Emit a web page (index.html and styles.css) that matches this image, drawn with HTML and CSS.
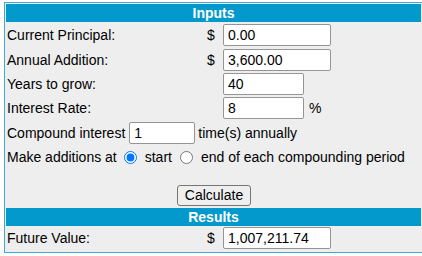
FILE: index.html
```html
<!DOCTYPE html>
<html>
<head>
<meta charset="utf-8">
<link rel="stylesheet" href="styles.css">
</head>
<body>
<div class="panel">
  <div class="head">Inputs</div>
  <div class="content">
    <div class="row"><span class="lbl">Current Principal:</span><span class="cur">$</span><input class="field wide" type="text" value="0.00"></div>
    <div class="row"><span class="lbl">Annual Addition:</span><span class="cur">$</span><input class="field wide" type="text" value="3,600.00"></div>
    <div class="row"><span class="lbl">Years to grow:</span><span class="cur"></span><input class="field mid" type="text" value="40"></div>
    <div class="row"><span class="lbl">Interest Rate:</span><span class="cur"></span><input class="field mid" type="text" value="8"><span class="unit">%</span></div>
    <div class="row">Compound interest<input class="field small" type="text" value="1"><span class="after">time(s) annually</span></div>
    <div class="row">Make additions at<input class="radio first" type="radio" name="add" checked><span>start</span><input class="radio" type="radio" name="add"><span>end of each compounding period</span></div>
    <div class="actions"><button class="btn" type="button">Calculate</button></div>
  </div>
  <div class="head">Results</div>
  <div class="content result">
    <div class="row"><span class="lbl">Future Value:</span><span class="cur">$</span><input class="field wide" type="text" value="1,007,211.74"></div>
  </div>
</div>
</body>
</html>
```
FILE: styles.css
```css
html, body {
  margin: 0;
  padding: 0;
  overflow: hidden;
  background: #fff;
}
body {
  font: 14px "Liberation Sans", Arial, sans-serif;
  color: #000;
}
.panel {
  margin: 2px 0 0 4px;
  width: 419px;
  box-sizing: border-box;
  border: 1px solid #3fa9d8;
  padding: 1px;
  background: #eeeeee;
}
.head {
  background: #0499cc;
  color: #fff;
  font-weight: bold;
  text-align: center;
  height: 18px;
  line-height: 18px;
}
.content {
  padding: 1px 0 0 1px;
}
.content.result {
  padding: 0 0 1px 1px;
}
.row {
  display: flex;
  align-items: center;
  height: 24.4px;
  white-space: nowrap;
}
.lbl {
  width: 200px;
  flex: none;
}
.cur {
  width: 16px;
  flex: none;
}
.field {
  box-sizing: border-box;
  height: 22px;
  margin: 0;
  padding: 0 4px;
  border: 1px solid #959595;
  border-radius: 2px;
  background: #fff;
  font: 14px "Liberation Sans", Arial, sans-serif;
  color: #000;
}
.wide { width: 108px; }
.mid { width: 81px; }
.small { width: 66px; margin-left: 4px; }
.unit { margin-left: 5px; }
.after { margin-left: 3px; }
.radio {
  width: 13px;
  height: 13px;
  margin: 0 8px 0 8px;
}
.radio.first { margin-left: 7px; }
.actions {
  text-align: center;
  padding-top: 15.6px;
  padding-bottom: 2px;
}
.btn {
  box-sizing: border-box;
  height: 21px;
  padding: 0 7px;
  border: 1px solid #767676;
  border-radius: 3px;
  background: #efefef;
  font: 14px "Liberation Sans", Arial, sans-serif;
  color: #000;
}
```
